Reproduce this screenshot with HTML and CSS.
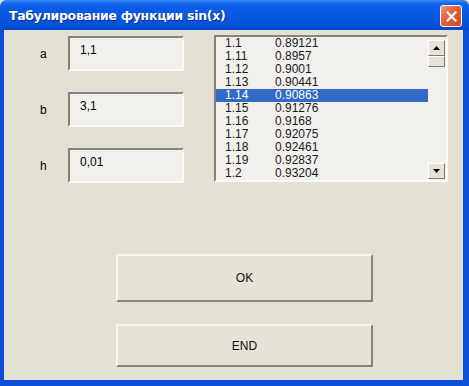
FILE: index.html
```html
<!DOCTYPE html>
<html>
<head>
<meta charset="utf-8">
<link rel="stylesheet" href="styles.css">
</head>
<body>
  <div class="window">
    <div class="titlebar">
      <span class="title">Табулирование функции sin(x)</span>
      <div class="close">
        <svg width="11" height="11" viewBox="0 0 11 11"><path d="M1.5 1.5 L9.5 9.5 M9.5 1.5 L1.5 9.5" stroke="#fff" stroke-width="2.2" stroke-linecap="square"/></svg>
      </div>
    </div>

    <div class="client">
      <div class="top">
        <div class="fields">
          <div class="field"><span class="lbl">a</span><div class="edit">1,1</div></div>
          <div class="field"><span class="lbl">b</span><div class="edit">3,1</div></div>
          <div class="field"><span class="lbl">h</span><div class="edit">0,01</div></div>
        </div>

        <div class="listbox">
          <div class="rows">
            <div class="row"><span class="x">1.1</span><span>0.89121</span></div>
            <div class="row"><span class="x">1.11</span><span>0.8957</span></div>
            <div class="row"><span class="x">1.12</span><span>0.9001</span></div>
            <div class="row"><span class="x">1.13</span><span>0.90441</span></div>
            <div class="row selected"><span class="x">1.14</span><span>0.90863</span></div>
            <div class="row"><span class="x">1.15</span><span>0.91276</span></div>
            <div class="row"><span class="x">1.16</span><span>0.9168</span></div>
            <div class="row"><span class="x">1.17</span><span>0.92075</span></div>
            <div class="row"><span class="x">1.18</span><span>0.92461</span></div>
            <div class="row"><span class="x">1.19</span><span>0.92837</span></div>
            <div class="row"><span class="x">1.2</span><span>0.93204</span></div>
          </div>
          <div class="scrollbar">
            <div class="sbtn"><svg width="7" height="4" viewBox="0 0 7 4"><polygon points="3.5,0 7,4 0,4" fill="#000"/></svg></div>
            <div class="thumb"></div>
            <div class="track"></div>
            <div class="sbtn"><svg width="7" height="4" viewBox="0 0 7 4"><polygon points="0,0 7,0 3.5,4" fill="#000"/></svg></div>
          </div>
        </div>
      </div>

      <div class="buttons">
        <div class="btn ok">OK</div>
        <div class="btn end">END</div>
      </div>
    </div>
  </div>
</body>
</html>
```

FILE: styles.css
```css
html, body {
  margin: 0;
  padding: 0;
  background: #e4e0d4;
}

body {
  font-family: "Liberation Sans", Arial, sans-serif;
  font-size: 12px;
  color: #000;
}

.window {
  width: 469px;
  height: 386px;
  box-sizing: border-box;
  display: flex;
  flex-direction: column;
  background: #0a4fd6;
  border-radius: 7px 7px 0 0;
  overflow: hidden;
}

/* title bar */
.titlebar {
  height: 30px;
  flex: none;
  display: flex;
  align-items: center;
  justify-content: space-between;
  padding: 0 7px 0 9px;
  background: linear-gradient(#3d8ff7 0, #1469ea 3px, #0a5ce6 8px, #0657e0 18px, #0550d8 26px, #0348c8 30px);
}

.title {
  color: #fff;
  font-family: "DejaVu Sans", Tahoma, sans-serif;
  font-weight: bold;
  font-size: 12.5px;
  letter-spacing: -0.3px;
  text-shadow: 1px 1px 0 #0b2f8a;
  margin-top: 1px;
}

.close {
  width: 20px;
  height: 20px;
  margin-top: 2px;
  border: 1px solid #fff;
  border-radius: 3px;
  background: linear-gradient(135deg, #f29a74 0, #e4643d 40%, #cf4822 100%);
  display: flex;
  align-items: center;
  justify-content: center;
}

/* client area */
.client {
  flex: 1;
  margin: 0 6px 6px 4px;
  background: #e4e0d4;
  display: flex;
  flex-direction: column;
}

.top {
  display: flex;
  padding-top: 5px;
  gap: 30px;
}

.fields {
  display: flex;
  flex-direction: column;
  gap: 21px;
  padding-left: 36px;
  margin-top: 1px;
}

.field {
  display: flex;
  align-items: center;
}

.lbl {
  width: 28px;
  font-size: 12px;
}

.edit {
  width: 116px;
  height: 35px;
  box-sizing: border-box;
  padding: 5px 0 0 10px;
  background: #f1f0ec;
  border-top: 2px solid #85837c;
  border-left: 2px solid #85837c;
  border-right: 2px solid #fbfaf6;
  border-bottom: 2px solid #fbfaf6;
  font-size: 12px;
}

/* list box */
.listbox {
  width: 234px;
  height: 147px;
  box-sizing: border-box;
  display: flex;
  background: #f1f0ec;
  border-top: 2px solid #85837c;
  border-left: 2px solid #85837c;
  border-right: 2px solid #fbfaf6;
  border-bottom: 2px solid #fbfaf6;
}

.rows {
  flex: 1;
  padding-top: 0;
}

.row {
  display: flex;
  height: 13px;
  line-height: 13px;
  padding-left: 9px;
  font-size: 12px;
  color: #1a1a1a;
}

.row .x {
  width: 50px;
}

.row.selected {
  background: #316ac5;
  color: #fff;
}

.scrollbar {
  width: 17px;
  display: flex;
  flex-direction: column;
  padding: 3px 0 1px;
  margin-right: 1px;
}

.sbtn, .thumb {
  height: 16px;
  box-sizing: border-box;
  background: #e6e2d6;
  border-top: 1px solid #fff;
  border-left: 1px solid #fff;
  border-right: 1px solid #7d7b74;
  border-bottom: 1px solid #7d7b74;
  display: flex;
  align-items: center;
  justify-content: center;
}

.thumb {
  height: 11px;
}

.track {
  flex: 1;
}

/* buttons */
.buttons {
  display: flex;
  flex-direction: column;
  align-items: flex-start;
  padding-left: 112px;
  margin-top: 71px;
  gap: 22px;
}

.btn {
  width: 257px;
  box-sizing: border-box;
  display: flex;
  align-items: center;
  justify-content: center;
  background: #e6e2d7;
  border-top: 2px solid #f7f5ee;
  border-left: 2px solid #f7f5ee;
  border-right: 2px solid #86847c;
  border-bottom: 2px solid #86847c;
  font-size: 12px;
  color: #111;
}

.ok {
  height: 48px;
}

.end {
  height: 43px;
}
```
